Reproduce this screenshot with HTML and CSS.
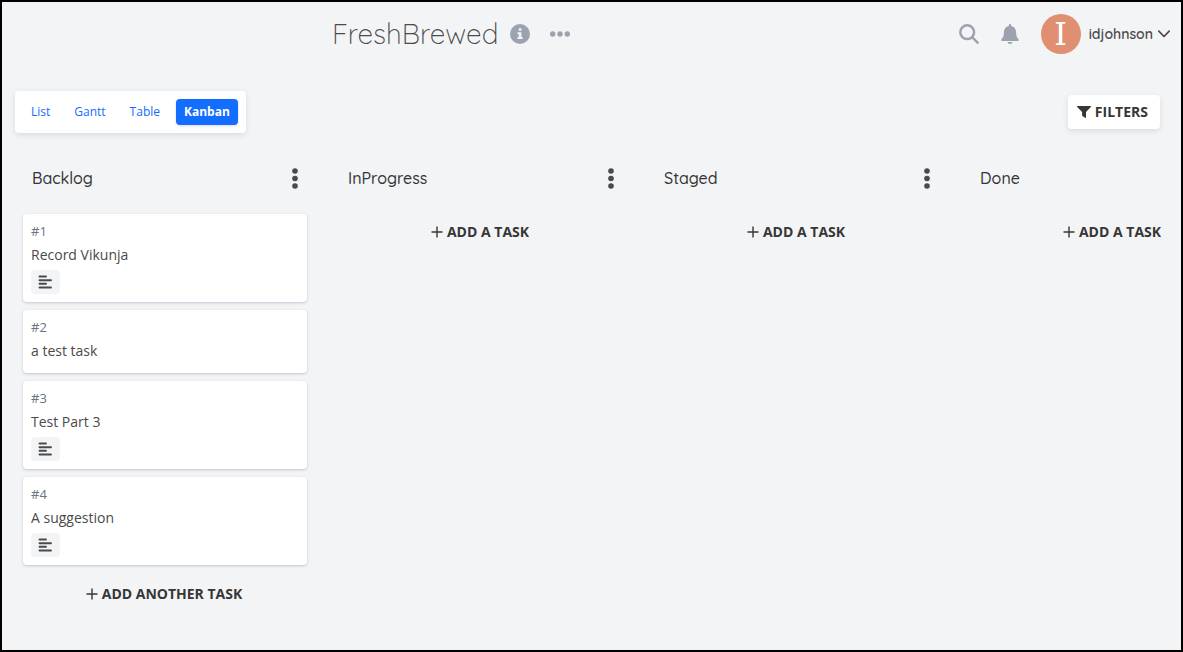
FILE: index.html
```html
<!DOCTYPE html>
<html lang="en">
<head>
    <meta charset="UTF-8">
    <meta name="viewport" content="width=device-width, initial-scale=1.0">
    <title>FreshBrewed | Vikunja</title>
    <link rel="stylesheet" href="styles.css">
</head>
<body>
    <svg class="sprite" aria-hidden="true">
        <symbol id="plus" viewBox="0 0 12 12">
            <path d="M6 1v10M1 6h10" fill="none" stroke="currentColor" stroke-width="1.4" stroke-linecap="round"/>
        </symbol>
        <symbol id="dots" viewBox="0 0 6 21">
            <g fill="currentColor"><circle cx="3" cy="3" r="2.8"/><circle cx="3" cy="10.5" r="2.8"/><circle cx="3" cy="18" r="2.8"/></g>
        </symbol>
        <symbol id="align" viewBox="0 0 14 14">
            <path d="M1.500 1.500h6.500M1.500 5.200h11.500M1.500 8.800h6.500M1.500 12.500h11.500" fill="none" stroke="currentColor" stroke-width="1.9" stroke-linecap="round"/>
        </symbol>
    </svg>

    <header class="navbar">
        <div class="project">
            <h1>FreshBrewed</h1>
            <button class="icon-btn" aria-label="Project info">
                <svg width="20" height="20" viewBox="0 0 20 20"><circle cx="10" cy="10" r="10" fill="currentColor"/><path class="cutout" d="M8.8 4.3h2.6v2.4H8.8zM7.5 8.2h3.9v4.700h1.2V15H7.5v-2.1h1.3v-2.6H7.5z"/></svg>
            </button>
            <button class="icon-btn" aria-label="Project menu">
                <svg width="20" height="6" viewBox="0 0 20 6" fill="currentColor"><circle cx="2.7" cy="3" r="2.7"/><circle cx="10" cy="3" r="2.7"/><circle cx="17.3" cy="3" r="2.7"/></svg>
            </button>
        </div>
        <div class="nav-end">
            <button class="icon-btn" aria-label="Search">
                <svg width="20" height="20" viewBox="0 0 20 20" fill="none" stroke="currentColor" stroke-width="2.5" stroke-linecap="round"><circle cx="8.2" cy="8.2" r="6.9"/><path d="M13.3 13.3l5.3 5.3"/></svg>
            </button>
            <button class="icon-btn" aria-label="Notifications">
                <svg width="18" height="20" viewBox="0 0 18 20" fill="currentColor"><path d="M7.8 1.2a1.2 1.2 0 0 1 2.4 0v.7c3 .6 4.9 3 4.9 6 0 4 .9 5.6 2.3 7 .9 1 .4 2.2-.9 2.2h-15C.2 17.100-.3 15.900.6 14.900c1.400-1.400 2.300-3 2.300-7 0-3 1.900-5.400 4.900-6zM6.500 18h5a2.500 2 0 0 1-5 0z"/></svg>
            </button>
            <button class="user">
                <span class="avatar" aria-hidden="true">I</span>
                <span class="username">idjohnson
                    <svg width="12" height="8" viewBox="0 0 12 8" fill="none" stroke="currentColor" stroke-width="1.7" stroke-linecap="round" stroke-linejoin="round"><path d="M.8 1.2L6 6.500l5.200-5.300"/></svg>
                </span>
            </button>
        </div>
    </header>

    <main class="content">
        <div class="toolbar">
            <nav class="switch-view">
                <a href="#list">List</a>
                <a href="#gantt">Gantt</a>
                <a href="#table">Table</a>
                <a href="#kanban" class="is-active">Kanban</a>
            </nav>
            <button class="filters">
                <svg width="14" height="12" viewBox="0 0 14 12" fill="currentColor"><path d="M.6 0h12.800c.6 0 .8.600.4 1L9 6v5.300c0 .6-.5.900-1 .5L5.500 10a1 1 0 0 1-.4-.8V6L.2 1C-.2.600 0 0 .6 0z"/></svg>
                Filters
            </button>
        </div>

        <div class="board">
            <section class="bucket">
                <div class="bucket-header">
                    <h2>Backlog</h2>
                    <button class="bucket-menu" aria-label="Backlog options"><svg width="6" height="21"><use href="#dots"/></svg></button>
                </div>
                <div class="tasks">
                    <article class="task">
                        <span class="task-id">#1</span>
                        <h3>Record Vikunja</h3>
                        <span class="task-icon"><svg width="14" height="14"><use href="#align"/></svg></span>
                    </article>
                    <article class="task">
                        <span class="task-id">#2</span>
                        <h3>a test task</h3>
                    </article>
                    <article class="task">
                        <span class="task-id">#3</span>
                        <h3>Test Part 3</h3>
                        <span class="task-icon"><svg width="14" height="14"><use href="#align"/></svg></span>
                    </article>
                    <article class="task">
                        <span class="task-id">#4</span>
                        <h3>A suggestion</h3>
                        <span class="task-icon"><svg width="14" height="14"><use href="#align"/></svg></span>
                    </article>
                </div>
                <button class="add-task"><svg width="12" height="12"><use href="#plus"/></svg>Add another task</button>
            </section>

            <section class="bucket">
                <div class="bucket-header">
                    <h2>InProgress</h2>
                    <button class="bucket-menu" aria-label="InProgress options"><svg width="6" height="21"><use href="#dots"/></svg></button>
                </div>
                <button class="add-task"><svg width="12" height="12"><use href="#plus"/></svg>Add a task</button>
            </section>

            <section class="bucket">
                <div class="bucket-header">
                    <h2>Staged</h2>
                    <button class="bucket-menu" aria-label="Staged options"><svg width="6" height="21"><use href="#dots"/></svg></button>
                </div>
                <button class="add-task"><svg width="12" height="12"><use href="#plus"/></svg>Add a task</button>
            </section>

            <section class="bucket">
                <div class="bucket-header">
                    <h2>Done</h2>
                    <button class="bucket-menu" aria-label="Done options"><svg width="6" height="21"><use href="#dots"/></svg></button>
                </div>
                <button class="add-task"><svg width="12" height="12"><use href="#plus"/></svg>Add a task</button>
            </section>
        </div>
    </main>
</body>
</html>
```
FILE: styles.css
```css
* {
    margin: 0;
    padding: 0;
    box-sizing: border-box;
}

body {
    font-family: 'Open Sans', sans-serif;
    font-size: 14px;
    background: #f3f4f6;
    color: #4a4a4a;
    min-height: 100vh;
    border: 2px solid #000;
    overflow: hidden;
}

button {
    border: none;
    background: none;
    font: inherit;
    color: inherit;
    cursor: pointer;
}

svg {
    display: block;
    flex-shrink: 0;
}

.sprite {
    position: absolute;
    width: 0;
    height: 0;
}

/* Top bar */
.navbar {
    display: flex;
    justify-content: space-between;
    align-items: center;
    height: 64px;
    padding: 0 11px 0 28%;
}

.project {
    display: flex;
    align-items: center;
    gap: 20px;
}

.project h1 {
    font-family: Quicksand, Lato, sans-serif;
    font-size: 28px;
    font-weight: 300;
    line-height: 40px;
    margin-right: -8px;
}

.icon-btn {
    color: #9ca3af;
}

.cutout {
    fill: #f3f4f6;
}

.nav-end {
    display: flex;
    align-items: center;
    gap: 22px;
}

.user {
    display: flex;
    align-items: center;
    gap: 8px;
    font-family: Quicksand, Lato, sans-serif;
    font-weight: 600;
}

.username {
    display: flex;
    align-items: center;
    gap: 5px;
}

.avatar {
    width: 40px;
    height: 40px;
    border-radius: 50%;
    background: #e08f70;
    color: #fff;
    font-family: 'DejaVu Serif', serif;
    font-size: 32px;
    font-weight: 400;
    line-height: 40px;
    text-align: center;
}

/* View switcher and filters */
.content {
    padding: 25px 0 0 13px;
}

.toolbar {
    display: flex;
    justify-content: space-between;
    align-items: center;
    padding-right: 21px;
}

.switch-view {
    display: flex;
    gap: 8px;
    padding: 8px;
    background: #fff;
    border-radius: 4px;
    box-shadow: 0 2px 6px rgba(0, 0, 0, 0.1);
    font-size: 12px;
    line-height: 18px;
}

.switch-view a {
    padding: 4px 8px;
    border-radius: 4px;
    color: #136dff;
    text-decoration: none;
}

.switch-view .is-active {
    background: #136dff;
    color: #fff;
    font-weight: 700;
    box-shadow: 0 1px 3px rgba(0, 0, 0, 0.15);
}

.filters {
    display: flex;
    align-items: center;
    gap: 4px;
    padding: 7px 12px 7px 9px;
    background: #fff;
    border-radius: 4px;
    box-shadow: 0 2px 6px rgba(0, 0, 0, 0.1);
    color: #363636;
    font-weight: 700;
    line-height: 20px;
    text-transform: uppercase;
}

/* Kanban board */
.board {
    display: flex;
    gap: 16px;
    padding-top: 25px;
    overflow: hidden;
}

.bucket {
    flex: 0 0 300px;
    padding: 0 8px 8px;
}

.bucket-header {
    display: flex;
    justify-content: space-between;
    align-items: center;
    height: 40px;
    padding: 0 9px;
    margin-bottom: 16px;
}

.bucket-header h2 {
    font-family: Quicksand, Lato, sans-serif;
    font-size: 16px;
    font-weight: 500;
    color: #363636;
}

.tasks {
    display: flex;
    flex-direction: column;
    gap: 8px;
    margin-bottom: 11px;
}

.task {
    padding: 7px 8px 8px;
    background: #fff;
    border-radius: 4px;
    box-shadow: 0 1px 3px rgba(31, 41, 90, 0.22);
}

.task-id {
    display: block;
    color: #6b7280;
    font-size: 13px;
    line-height: 20px;
}

.task h3 {
    font-size: 14px;
    font-weight: 400;
    line-height: 27px;
    margin-bottom: 1px;
}

.task-icon {
    display: flex;
    align-items: center;
    width: 29px;
    height: 24px;
    padding-left: 7px;
    margin-top: 2px;
    border-radius: 4px;
    background: #f3f4f6;
}

.add-task {
    display: flex;
    align-items: center;
    justify-content: center;
    gap: 4px;
    width: 100%;
    height: 35px;
    padding-right: 2px;
    color: #363636;
    font-weight: 700;
    text-transform: uppercase;
}
```
